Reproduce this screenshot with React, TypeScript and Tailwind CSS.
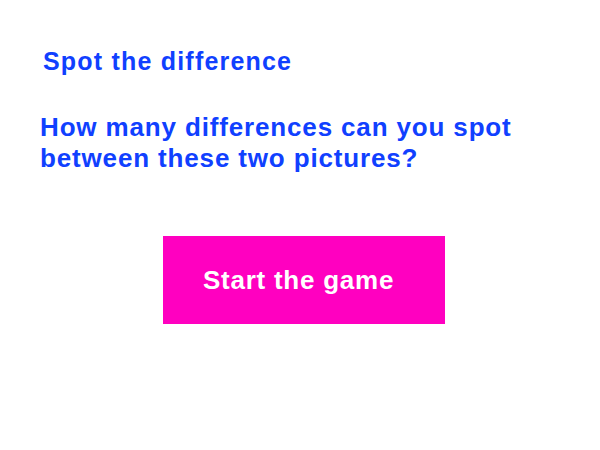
export default function App() {
  return (
    <div className="w-[600px] h-[450px] bg-white font-['Liberation_Sans',Arial,sans-serif] font-bold">
      <div className="pl-[43px] pt-[46px]">
        <h2 className="text-[25px] leading-[30px] tracking-[1.2px] text-[#1040ff]">Spot the difference</h2>
      </div>
      <div className="pl-[40px] pt-[36px]">
        <h1 className="text-[26px] leading-[31px] tracking-[0.85px] text-[#1040ff]">
          How many differences can you spot
          <br />
          between these two pictures?
        </h1>
      </div>
      <div className="flex justify-center pt-[62px]">
        <button className="ml-[8px] w-[282px] h-[88px] bg-[#ff00c0] text-white text-[26px] tracking-[0.75px] text-left pl-[40px]">
          Start the game
        </button>
      </div>
    </div>
  );
}
